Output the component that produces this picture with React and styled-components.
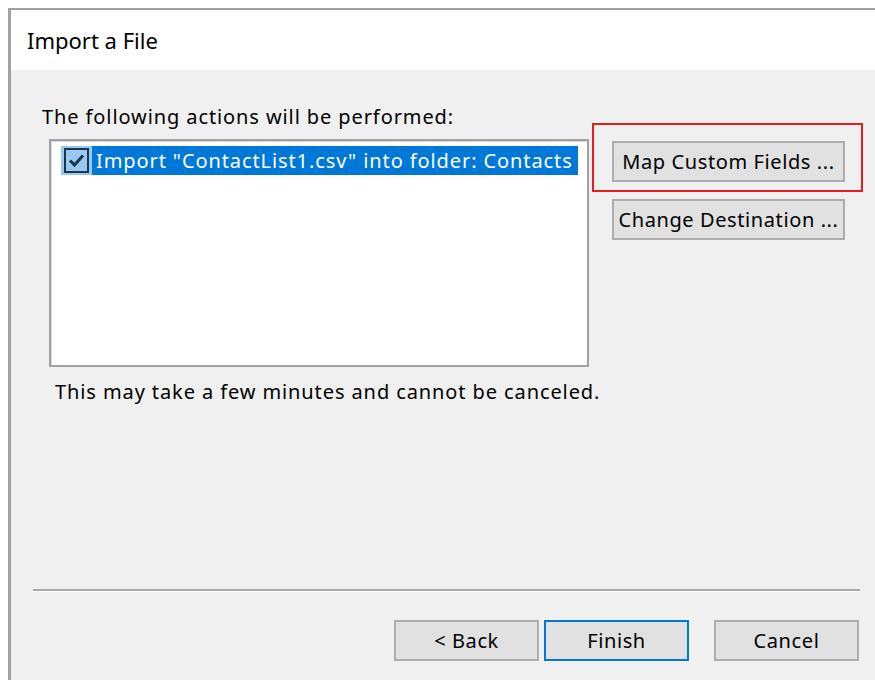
import React from 'react'
import styled, { createGlobalStyle } from 'styled-components'

const GlobalStyle = createGlobalStyle`
  html, body {
    margin: 0;
    padding: 0;
    background: #ffffff;
    overflow: hidden;
  }
  body {
    font-family: "Noto Sans", "Open Sans", sans-serif;
    color: #000;
  }
`

const Window = styled.div`
  margin: 8px 0 0 8px;
  width: 900px;
  height: 700px;
  border-left: 3px solid #a3a3a3;
  border-top: 2px solid #a0a0a0;
  display: flex;
  flex-direction: column;
`

const Header = styled.div`
  height: 60px;
  background: #ffffff;
  display: flex;
  align-items: center;
  padding-left: 16px;
`

const Title = styled.h1`
  margin: 0;
  font-size: 22px;
  font-weight: 400;
  line-height: 28px;
`

const Body = styled.div`
  flex: 1;
  background: #f0f0f0;
  padding: 35px 0 0 31px;
`

const Text = styled.div`
  font-size: 20px;
  line-height: 24px;
  letter-spacing: 0.9px;
  white-space: nowrap;
`

const Content = styled.div`
  display: flex;
  margin-top: 10px;
  margin-left: 7px;
`

const ListBox = styled.div`
  width: 540px;
  height: 228px;
  box-sizing: border-box;
  background: #ffffff;
  border: 2px solid #a0a0a8;
  padding: 5px 10px;
  box-shadow: inset 1px 1px 0 #d8d8d8;
`

const ListItem = styled.div`
  display: flex;
  height: 29px;
  width: 517px;
`

const CheckCell = styled.div`
  width: 31px;
  background: #99c9ef;
  display: flex;
  align-items: center;
  justify-content: center;
`

const Check = styled.div`
  width: 21px;
  height: 21px;
  border: 2px solid #1c3550;
  display: flex;
  align-items: center;
  justify-content: center;
`

const ItemText = styled.div`
  flex: 1;
  background: #0078d7;
  color: #ffffff;
  font-size: 20px;
  line-height: 29px;
  letter-spacing: 0.9px;
  padding-left: 4px;
  white-space: nowrap;
`

const Actions = styled.div`
  position: relative;
  margin-left: 23px;
  margin-top: 2px;
  display: flex;
  flex-direction: column;
  gap: 17px;
`

/* red callout frame drawn over the first action button */
const Callout = styled.div`
  position: absolute;
  left: -20px;
  top: -18px;
  width: 267px;
  height: 65px;
  border: 2px solid #e81c1c;
  pointer-events: none;
`

const Button = styled.button`
  width: ${p => p.$w || 145}px;
  height: 41px;
  box-sizing: border-box;
  background: #e1e1e1;
  border: 2px solid ${p => (p.$primary ? '#0078d7' : '#adadad')};
  font-family: "Noto Sans", "Open Sans", sans-serif;
  font-size: 20px;
  letter-spacing: 0.6px;
  color: #000;
  padding: 0;
  white-space: nowrap;
`

const Note = styled(Text)`
  margin: 13px 0 0 13px;
`

const Separator = styled.div`
  margin: 185px 0 0 -9px;
  width: 827px;
  border-top: 2px solid #a9a9a9;
  border-bottom: 1px solid #ffffff;
`

const Footer = styled.div`
  display: flex;
  margin: 28px 0 0 352px;
  gap: 5px;
`

const Spacer = styled.div`
  width: 15px;
`

const CheckMark = () => (
  <svg width="17" height="15" viewBox="0 0 17 15">
    <path d="M2 7.5 L6.5 12 L15 2.5" fill="none" stroke="#1c3550" strokeWidth="3" />
  </svg>
)

export default function App() {
  return (
    <>
      <GlobalStyle />
      <Window>
        <Header>
          <Title>Import a File</Title>
        </Header>
        <Body>
          <Text>The following actions will be performed:</Text>
          <Content>
            <ListBox>
              <ListItem>
                <CheckCell>
                  <Check>
                    <CheckMark />
                  </Check>
                </CheckCell>
                <ItemText>Import "ContactList1.csv" into folder: Contacts</ItemText>
              </ListItem>
            </ListBox>
            <Actions>
              <Callout />
              <Button $w={233}>Map Custom Fields ...</Button>
              <Button $w={233}>Change Destination ...</Button>
            </Actions>
          </Content>
          <Note>This may take a few minutes and cannot be canceled.</Note>
          <Separator />
          <Footer>
            <Button>&lt; Back</Button>
            <Button $primary>Finish</Button>
            <Spacer />
            <Button>Cancel</Button>
          </Footer>
        </Body>
      </Window>
    </>
  )
}
